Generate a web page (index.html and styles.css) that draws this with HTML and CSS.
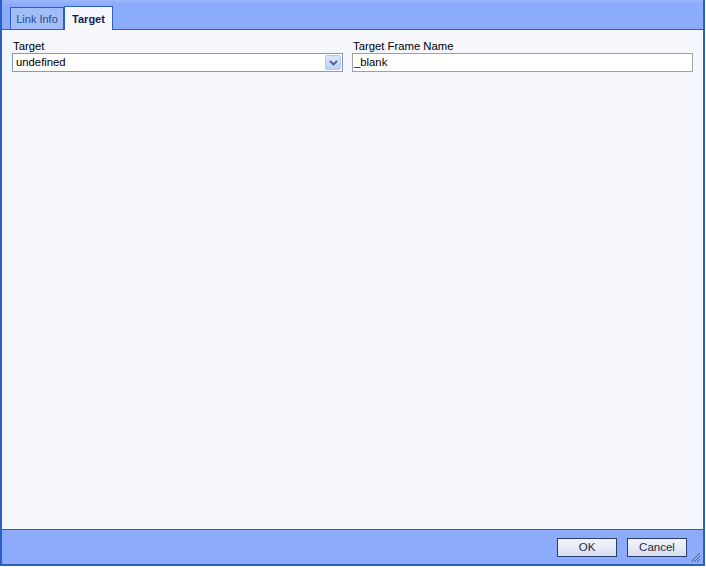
FILE: index.html
```html
<!DOCTYPE html>
<html>
<head>
<meta charset="utf-8">
<link rel="stylesheet" href="styles.css">
</head>
<body>
<div class="dialog">
  <div class="tabbar">
    <div class="tab">Link Info</div>
    <div class="tab active">Target</div>
  </div>
  <div class="content">
    <div class="row">
      <div class="field left">
        <label class="label">Target</label>
        <div class="select">
          <span class="select-value">undefined</span>
          <span class="select-btn">
            <svg width="9" height="6" viewBox="0 0 9 6"><path d="M1 1 L4.5 4.5 L8 1" fill="none" stroke="#4d6185" stroke-width="1.8"/></svg>
          </span>
        </div>
      </div>
      <div class="field right">
        <label class="label">Target Frame Name</label>
        <div class="input">_blank</div>
      </div>
    </div>
  </div>
  <div class="footer">
    <button class="btn">OK</button>
    <button class="btn">Cancel</button>
    <span class="grip">
      <svg width="11" height="11" viewBox="0 0 11 11">
        <path d="M10 1 L1 10 M10 4 L4 10 M10 7 L7 10" stroke="#4a5f88" stroke-width="1"/>
      </svg>
    </span>
  </div>
</div>
</body>
</html>
```
FILE: styles.css
```css
html, body {
  margin: 0;
  padding: 0;
  background: #ffffff;
}
body {
  width: 706px;
  height: 568px;
  font-family: Tahoma, "DejaVu Sans", "Liberation Sans", sans-serif;
}
.dialog {
  width: 701px;
  height: 564px;
  border-left: 2px solid #2b5fc6;
  border-right: 2px solid #2b5fc6;
  border-bottom: 2px solid #2b5fc6;
  display: flex;
  flex-direction: column;
  background: #8cacfb;
}
.tabbar {
  height: 29px;
  display: flex;
  align-items: flex-end;
  padding-left: 8px;
  background: linear-gradient(#9ab6fc, #8cacfb 4px);
  box-sizing: border-box;
}
.tab {
  height: 22px;
  width: 54px;
  text-align: center;
  box-sizing: border-box;
  border: 1px solid #2b5fc6;
  border-bottom: none;
  background: #a3bdf9;
  color: #2e4a86;
  font-family: "Liberation Sans", Arial, sans-serif;
  font-size: 11px;
  line-height: 22px;
  padding: 0;
}
.tab.active {
  height: 24px;
  line-height: 24px;
  width: 49px;
  background: #f6f7fc;
  color: #0b2154;
  font-weight: bold;
  margin-bottom: -1px;
  position: relative;
  z-index: 1;
}
.content {
  flex: 1;
  background: #f6f7fc;
  border-top: 1px solid #2b5fc6;
  border-bottom: 1px solid #2b5fc6;
  padding: 10px 10px 0 10px;
}
.row {
  display: flex;
  gap: 9px;
}
.field {
  display: flex;
  flex-direction: column;
}
.left { width: 331px; }
.right { width: 341px; }
.label {
  font-family: "Liberation Sans", Arial, sans-serif;
  font-size: 11.3px;
  color: #000;
  height: 13px;
  line-height: 13px;
  padding-left: 1px;
}
.select, .input {
  height: 19px;
  box-sizing: border-box;
  background: #fff;
  font-family: "Liberation Sans", Arial, sans-serif;
  font-size: 11.3px;
  color: #000;
  line-height: 17px;
  display: flex;
  align-items: center;
}
.select {
  border: 1px solid #7f9db9;
  justify-content: space-between;
  padding: 1px 1px 1px 3px;
}
.input {
  border: 1px solid #a0a0a0;
  padding-left: 1px;
}
.select-btn {
  width: 16px;
  height: 15px;
  box-sizing: border-box;
  border: 1px solid #b5c7ee;
  border-radius: 2px;
  background: linear-gradient(#dce6fd, #bccffa);
  display: flex;
  align-items: center;
  justify-content: center;
}
.footer {
  height: 34px;
  display: flex;
  align-items: center;
  justify-content: flex-end;
  padding-right: 16px;
  gap: 10px;
  position: relative;
}
.btn {
  width: 60px;
  height: 19px;
  box-sizing: border-box;
  border: 1px solid #283e6c;
  background: linear-gradient(#f2f4fb, #e3e8f5 60%, #d6ddef);
  font-family: "Liberation Sans", Arial, sans-serif;
  font-size: 11.5px;
  color: #1c2a4a;
  padding: 0;
}
.grip {
  position: absolute;
  right: 2px;
  bottom: 1px;
  width: 11px;
  height: 11px;
  line-height: 0;
}
```
